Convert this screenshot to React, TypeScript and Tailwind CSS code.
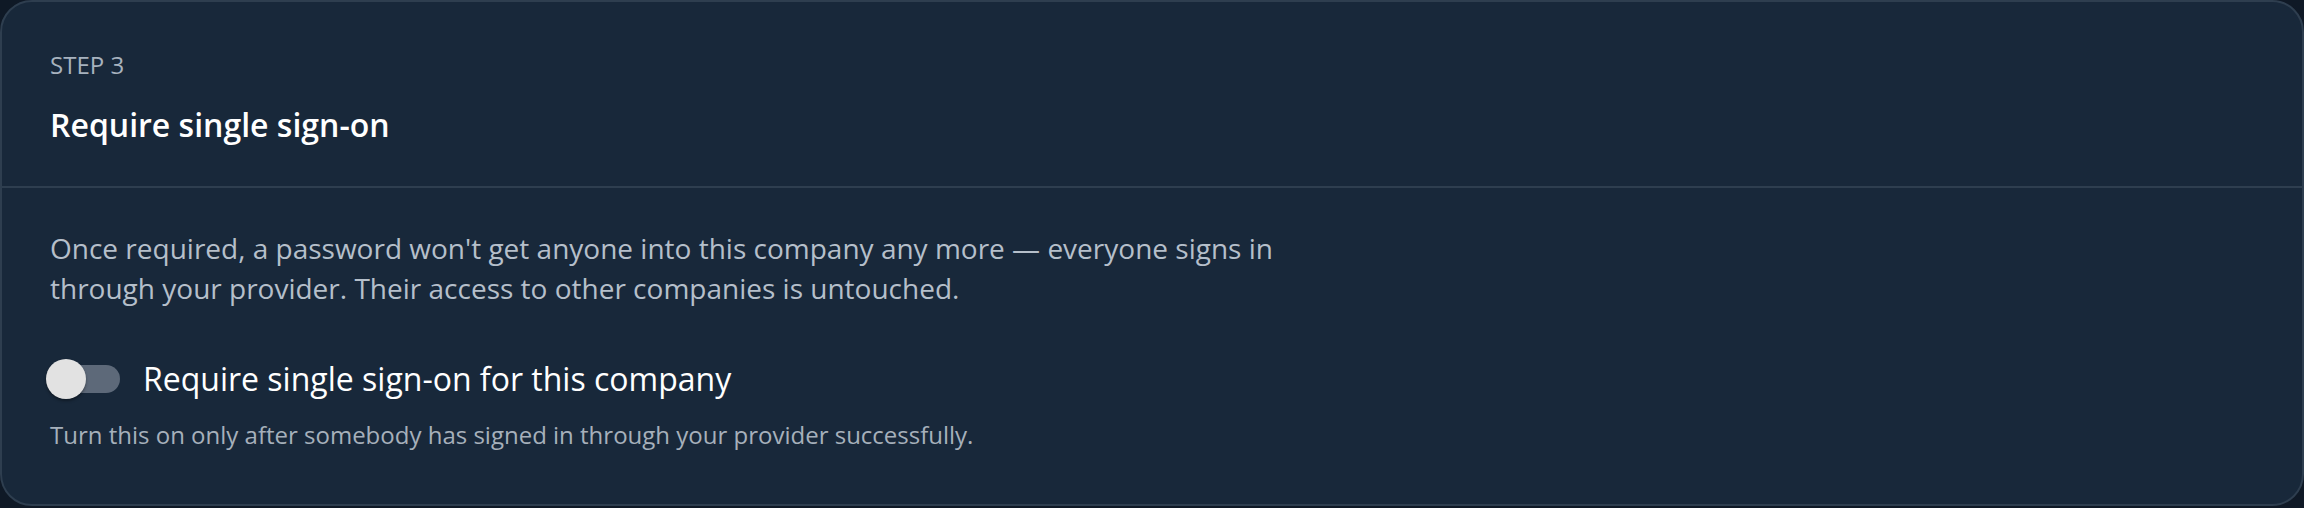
import React, { useState } from 'react';

function Toggle({ on, onChange }: { on: boolean; onChange: (v: boolean) => void }) {
  return (
    <button
      type="button"
      role="switch"
      aria-checked={on}
      onClick={() => onChange(!on)}
      className="relative flex h-10 w-[70px] shrink-0 items-center"
    >
      <span className={`h-7 w-[70px] rounded-full ${on ? 'bg-[#3b82f6]' : 'bg-[#5d6979]'}`} />
      <span
        className={`absolute top-0 h-10 w-10 rounded-full bg-[#e2e2e2] shadow-[0_2px_3px_rgba(0,0,0,0.35)] transition-all ${on ? 'left-[34px]' : 'left-[-4px]'}`}
      />
    </button>
  );
}

export default function App() {
  const [required, setRequired] = useState(false);

  return (
    <div className="min-h-[508px] bg-[#0f1926] font-['Open_Sans',sans-serif]">
      <section className="rounded-[32px] border-2 border-[#2e3e4f] bg-[#18283a]">
        {/* Header */}
        <div className="border-b-2 border-[#2e3e4f] px-12 pt-[47px] pb-[41px]">
          <div className="text-[24px] leading-8 uppercase text-[#a7b2be]">Step 3</div>
          <h2 className="mt-6 text-[32px] leading-10 font-semibold text-white">Require single sign-on</h2>
        </div>

        {/* Body */}
        <div className="px-12 pt-10 pb-[53px]">
          <p className="max-w-[1280px] text-[28px] leading-10 text-[#b5bfca]">
            Once required, a password won't get anyone into this company any more — everyone signs in
            through your provider. Their access to other companies is untouched.
          </p>

          <div className="mt-[47px] flex h-12 items-center gap-[23px]">
            <Toggle on={required} onChange={setRequired} />
            <span className="text-[32px] leading-10 text-white">Require single sign-on for this company</span>
          </div>

          <p className="mt-4 text-[24px] leading-8 text-[#a6b0bb]">
            Turn this on only after somebody has signed in through your provider successfully.
          </p>
        </div>
      </section>
    </div>
  );
}
